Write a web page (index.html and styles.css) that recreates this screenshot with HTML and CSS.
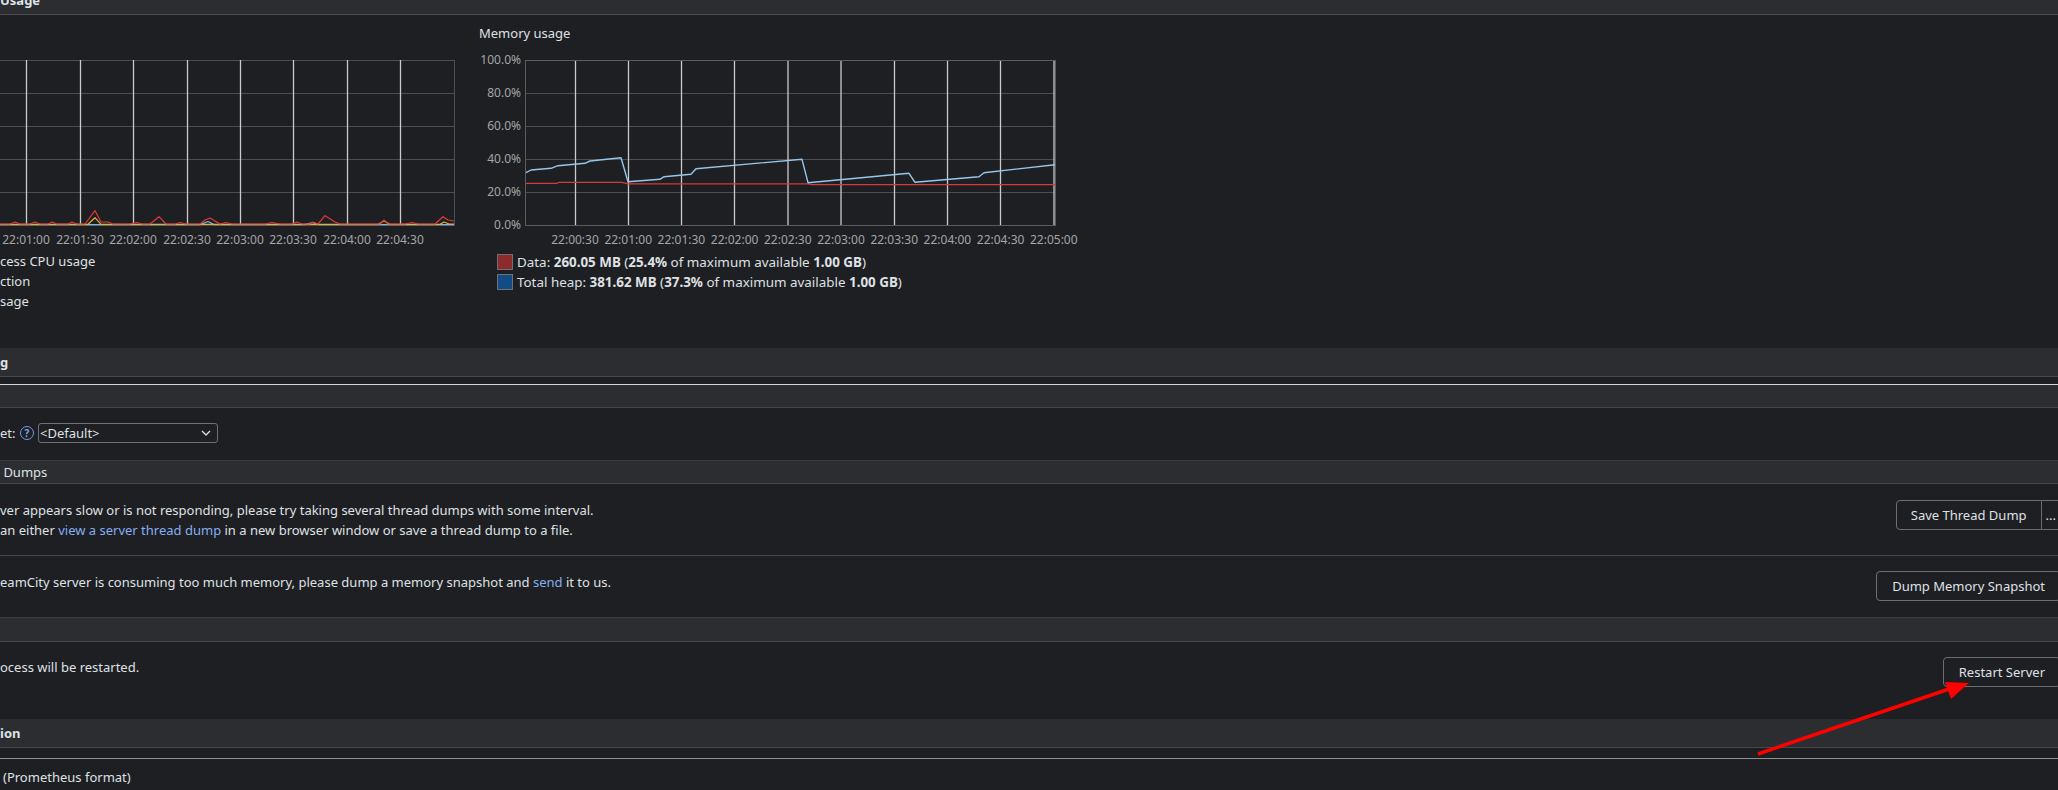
FILE: index.html
```html
<!DOCTYPE html>
<html>
<head>
<meta charset="utf-8">
<link rel="stylesheet" href="styles.css">
</head>
<body>
<div class="page">
  <div class="top-hdr"><span class="t">Usage</span></div>

  <div class="charts">
    <div class="chart cpu">
      <div class="chart-title"></div>
      <svg class="plot" width="479" height="201" viewBox="0 0 479 201">
        <g class="hgrid">
          <line x1="0" y1="10.5" x2="454" y2="10.5"/>
          <line x1="0" y1="43.5" x2="454" y2="43.5"/>
          <line x1="0" y1="76.5" x2="454" y2="76.5"/>
          <line x1="0" y1="109.5" x2="454" y2="109.5"/>
          <line x1="0" y1="142.5" x2="454" y2="142.5"/>
          <line x1="0" y1="175.5" x2="454" y2="175.5"/>
          <line x1="454.5" y1="10" x2="454.5" y2="176"/>
        </g>
        <g class="vgrid">
          <line x1="26.5" y1="10" x2="26.5" y2="175"/>
          <line x1="80.5" y1="10" x2="80.5" y2="175"/>
          <line x1="133.5" y1="10" x2="133.5" y2="175"/>
          <line x1="187.5" y1="10" x2="187.5" y2="175"/>
          <line x1="240.5" y1="10" x2="240.5" y2="175"/>
          <line x1="293.5" y1="10" x2="293.5" y2="175"/>
          <line x1="347.5" y1="10" x2="347.5" y2="175"/>
          <line x1="400.5" y1="10" x2="400.5" y2="175"/>
        </g>
        <polyline class="s-blue" points="0,174.6 200,174.6 208,171.5 214,174.6 305,174.6 313,172.5 318,174.6 454,174.6"/>
        <polyline class="s-yellow" points="0,174.3 88,174.3 95,167.7 101,174.3 378,174.3 384,171 390,174.3 440,174.3 444,172 449,174 454,174"/>
        <polyline class="s-red" points="0,174 10,174 15,172 20,174 30,174 35,172 40,174 48,174 52,172 57,174 68,174 72,172 77,174 85,174 95,160.7 101,172 108,172 113,174 130,174 137,172.5 142,174 150,174 159,166.7 166,174 175,174 180,172.5 186,174 200,174 205,170 210,168 215,171 220,174 226,172.5 232,174 265,174 272,172.5 280,174 292,174 297,172 302,174 310,174 313,172 318,174 325,165.7 335,172 340,174 380,174 384,170 388,174 405,174 412,172.5 418,174 435,174 443,166.7 448,170 454,171"/>
        <g class="tlabels">
          <text x="26" y="194">22:01:00</text>
          <text x="80" y="194">22:01:30</text>
          <text x="133" y="194">22:02:00</text>
          <text x="187" y="194">22:02:30</text>
          <text x="240" y="194">22:03:00</text>
          <text x="293" y="194">22:03:30</text>
          <text x="347" y="194">22:04:00</text>
          <text x="400" y="194">22:04:30</text>
        </g>
      </svg>
      <div class="legend">
        <div class="legend-row">cess CPU usage</div>
        <div class="legend-row">ction</div>
        <div class="legend-row">sage</div>
      </div>
    </div>

    <div class="chart mem">
      <div class="chart-title">Memory usage</div>
      <svg class="plot" width="620" height="202" viewBox="0 0 620 202">
        <g class="hgrid">
          <line x1="46" y1="43.5" x2="576" y2="43.5"/>
          <line x1="46" y1="76.5" x2="576" y2="76.5"/>
          <line x1="46" y1="109.5" x2="576" y2="109.5"/>
          <line x1="46" y1="142.5" x2="576" y2="142.5"/>
        </g>
        <rect class="frame" x="46.5" y="10.5" width="530" height="165"/>
        <g class="vgrid">
          <line x1="96.5" y1="11" x2="96.5" y2="175"/>
          <line x1="149.5" y1="11" x2="149.5" y2="175"/>
          <line x1="202.5" y1="11" x2="202.5" y2="175"/>
          <line x1="255.5" y1="11" x2="255.5" y2="175"/>
          <line x1="309" y1="11" x2="309" y2="175"/>
          <line x1="362" y1="11" x2="362" y2="175"/>
          <line x1="415.5" y1="11" x2="415.5" y2="175"/>
          <line x1="468.5" y1="11" x2="468.5" y2="175"/>
          <line x1="521.5" y1="11" x2="521.5" y2="175"/>
          <line x1="575" y1="11" x2="575" y2="175"/>
        </g>
        <polyline class="s-data" points="47,133.3 78,133.3 80,132.3 143,132.3 149,133.8 329,133.8 333,134.6 576,134.6"/>
        <polyline class="s-heap" points="47,122.7 52,120 72,118.3 79,115.7 106,113.3 111,111 142,107.7 149,131.7 181,129.3 185,126.7 212,124.3 217,118.7 323,109.3 329,132.7 430,123.3 436,132.3 500,126.7 505,122.7 576,114.7"/>
        <g class="ylabels">
          <text x="42" y="14">100.0%</text>
          <text x="42" y="47">80.0%</text>
          <text x="42" y="80">60.0%</text>
          <text x="42" y="113">40.0%</text>
          <text x="42" y="146">20.0%</text>
          <text x="42" y="179">0.0%</text>
        </g>
        <g class="tlabels">
          <text x="96" y="194">22:00:30</text>
          <text x="149.2" y="194">22:01:00</text>
          <text x="202.4" y="194">22:01:30</text>
          <text x="255.6" y="194">22:02:00</text>
          <text x="308.8" y="194">22:02:30</text>
          <text x="362" y="194">22:03:00</text>
          <text x="415.2" y="194">22:03:30</text>
          <text x="468.4" y="194">22:04:00</text>
          <text x="521.6" y="194">22:04:30</text>
          <text x="574.8" y="194">22:05:00</text>
        </g>
      </svg>
      <div class="legend">
        <div class="legend-row"><span class="swatch sw-data"></span>Data:&nbsp;<b>260.05 MB</b>&nbsp;(<b>25.4%</b>&nbsp;of maximum available&nbsp;<b>1.00 GB</b>)</div>
        <div class="legend-row"><span class="swatch sw-heap"></span>Total heap:&nbsp;<b>381.62 MB</b>&nbsp;(<b>37.3%</b>&nbsp;of maximum available&nbsp;<b>1.00 GB</b>)</div>
      </div>
    </div>
  </div>

  <div class="sec-hdr">g</div>
  <div class="tbl-hdr"></div>
  <div class="field-row">
    <span class="lbl">et:</span>
    <span class="help">?</span>
    <div class="select"><span>&lt;Default&gt;</span>
      <svg class="chev" width="10" height="6" viewBox="0 0 10 6"><polyline points="1,1 5,5 9,1"/></svg>
    </div>
  </div>

  <div class="sub-hdr">&nbsp;Dumps</div>
  <div class="row thread">
    <div class="txt">
      <div>ver appears slow or is not responding, please try taking several thread dumps with some interval.</div>
      <div>an either <a class="lnk">view a server thread dump</a> in a new browser window or save a thread dump to a file.</div>
    </div>
    <div class="btn-group">
      <button class="btn btn-main">Save Thread Dump</button>
      <button class="btn btn-more">...</button>
    </div>
  </div>
  <div class="row memdump">
    <div class="txt">eamCity server is consuming too much memory, please dump a memory snapshot and <a class="lnk">send</a> it to us.</div>
    <button class="btn">Dump Memory Snapshot</button>
  </div>

  <div class="sub-hdr sub-hdr2"></div>
  <div class="row restart">
    <div class="txt">ocess will be restarted.</div>
    <button class="btn">Restart Server</button>
  </div>

  <div class="sec-hdr">ion</div>
  <div class="tbl-line"></div>
  <div class="row prom">
    <div class="txt">(Prometheus format)</div>
  </div>
</div>

<svg class="arrow" width="240" height="90" viewBox="0 0 240 90">
  <line x1="8" y1="79" x2="202" y2="13"/>
  <polygon points="219,8 201,24 195,7"/>
</svg>
</body>
</html>
```

FILE: styles.css
```css
* { box-sizing: border-box; }
html, body { margin: 0; padding: 0; }
body {
  width: 2058px;
  height: 790px;
  overflow: hidden;
  position: relative;
  background: #1e1f22;
  color: #dfe1e5;
  font-family: "Noto Sans", "DejaVu Sans", sans-serif;
  font-size: 13px;
  line-height: 20px;
}
.page { width: 2061px; }

.top-hdr {
  height: 15px;
  background: #2b2d30;
  border-bottom: 1px solid #4a4c51;
  overflow: hidden;
}
.top-hdr .t {
  display: block;
  margin-top: -10px;
  line-height: 20px;
  font-weight: bold;
}

.charts { display: flex; height: 333px; }
.chart { display: flex; flex-direction: column; }
.chart.cpu { width: 479px; }
.chart.mem { width: 620px; }
.chart-title { margin-top: 9px; height: 18px; line-height: 18px; }
.plot { display: block; margin-top: 8px; overflow: visible; }
.hgrid line { stroke: #4b4d52; stroke-width: 1; }
.frame { fill: none; stroke: #5a5c60; stroke-width: 1; }
.vgrid line { stroke: #c9cacc; stroke-width: 1.3; }
.plot text { font-family: "Noto Sans", "DejaVu Sans", sans-serif; font-size: 12px; fill: #a3a5a9; }
.tlabels text { text-anchor: middle; }
.ylabels text { text-anchor: end; }
polyline { fill: none; stroke-width: 1.2; stroke-linejoin: round; }
.s-red { stroke: #e0393c; }
.s-yellow { stroke: #d9b23a; }
.s-blue { stroke: #7fb6e0; }
.s-data { stroke: #d8393b; }
.s-heap { stroke: #96c6ea; stroke-width: 1.4; }

.legend { white-space: nowrap; }
.legend-row { display: flex; align-items: center; height: 20px; }
.mem .legend { padding-left: 18px; font-size: 13.4px; }
.swatch {
  width: 16px;
  height: 16px;
  border: 1px solid #6e7074;
  margin-right: 4px;
  flex: none;
}
.sw-data { background: #8c2a2c; }
.sw-heap { background: #114d84; }
.legend b { font-weight: bold; }

.sec-hdr {
  height: 29px;
  background: #2b2d30;
  border-bottom: 1px solid #45474b;
  font-weight: bold;
  line-height: 28px;
}
.tbl-hdr {
  margin-top: 7px;
  height: 24px;
  border-top: 1px solid #d4d6d9;
  border-bottom: 1px solid #45474b;
  background: #2b2d30;
}
.field-row {
  display: flex;
  align-items: center;
  padding: 15px 0 17px;
  height: 52px;
}
.lbl { width: 20px; }
.help {
  width: 14px;
  height: 14px;
  border: 1.3px solid #6f9de8;
  border-radius: 50%;
  color: #7aa6ee;
  font-size: 10px;
  line-height: 12px;
  text-align: center;
  font-weight: bold;
  margin-right: 4px;
}
.select {
  width: 180px;
  height: 20px;
  border: 1px solid #6e7074;
  border-radius: 3px;
  display: flex;
  align-items: center;
  justify-content: space-between;
  padding: 0 6px 0 1px;
  line-height: 18px;
}
.chev polyline { stroke: #dfe1e5; stroke-width: 1.3; }

.sub-hdr {
  height: 24px;
  background: #2b2d30;
  border-top: 1px solid #3a3c40;
  border-bottom: 1px solid #45474b;
  line-height: 22px;
}
.sub-hdr2 { height: 25px; }

.row {
  display: flex;
  justify-content: space-between;
  align-items: flex-start;
}
.row.thread { padding: 17px 0 14px; border-bottom: 1px solid #45474b; height: 72px; }
.row.thread .txt { margin-top: -1px; }
.row.memdump { padding: 15px 0 16px; height: 61px; }
.row.memdump .txt { padding-top: 1px; }
.row.restart { padding: 15px 0 32px; height: 77px; }
.row.prom { padding-top: 8px; }
.row.prom .txt { padding-left: 3px; }
.txt { white-space: nowrap; }
.lnk { color: #86aef2; text-decoration: none; }

.tbl-line {
  margin-top: 10px;
  border-top: 1px solid #8e9094;
}

.btn {
  height: 30px;
  padding: 0 15px;
  border: 1px solid #6b6e73;
  border-radius: 4px;
  background: transparent;
  color: #dfe1e5;
  font-family: "Noto Sans", "DejaVu Sans", sans-serif;
  font-size: 13px;
  line-height: 28px;
  white-space: nowrap;
}
.btn-group { display: flex; margin-top: -1px; }
.btn-main { border-radius: 4px 0 0 4px; padding: 0 14px; }
.btn-more { border-left: none; border-radius: 0 4px 4px 0; padding: 0 4px; }

.arrow {
  position: absolute;
  left: 1750px;
  top: 675px;
  overflow: visible;
}
.arrow line { stroke: #ff0000; stroke-width: 3.5; stroke-linecap: butt; }
.arrow polygon { fill: #ff0000; }
```
